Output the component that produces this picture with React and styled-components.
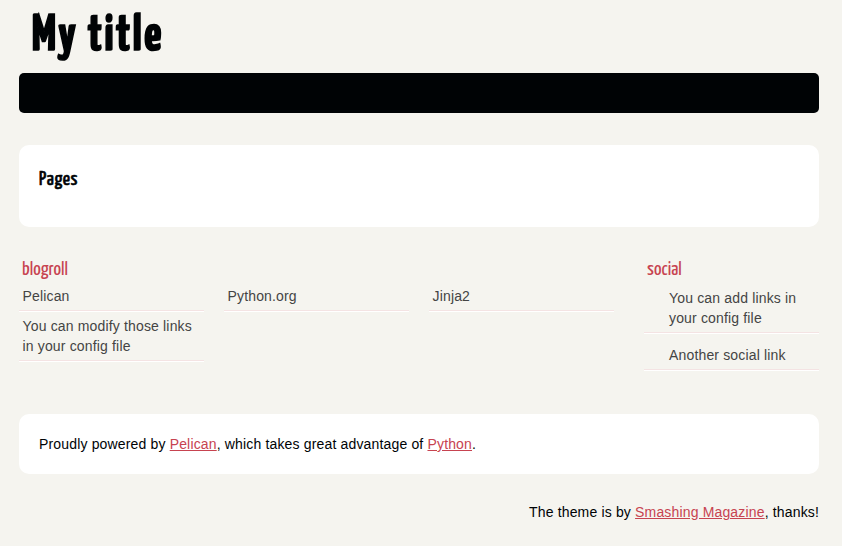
import React from "react";
import styled, { createGlobalStyle } from "styled-components";

const Global = createGlobalStyle`
  body {
    margin: 0;
    background: #f5f4ef;
    color: #000305;
    font-family: "Liberation Sans", Arial, sans-serif;
    font-size: 14px;
    line-height: 20px;
    letter-spacing: 0.16px;
  }
`;

const headingFont = `"Yanone Kaffeesatz", "Liberation Sans Narrow", "Liberation Sans", sans-serif`;

const Page = styled.div`
  width: 800px;
  margin-left: 19px;
`;

const SiteTitle = styled.h1`
  box-sizing: border-box;
  height: 73px;
  margin: 0;
  padding: 9px 0 0 13px;
  font-family: ${headingFont};
  font-weight: bold;
  font-size: 50px;
  line-height: 55px;
  letter-spacing: 2.6px;

  a {
    color: #000305;
    text-decoration: none;
    -webkit-text-stroke: 1.5px #000305;
  }
`;

const Nav = styled.nav`
  height: 40px;
  background: #000305;
  border-radius: 5px;
  margin-bottom: 32px;
`;

const Panel = styled.section`
  background: #fff;
  border-radius: 10px;
  padding: 20px;
`;

const PanelTitle = styled.h2`
  margin: 0;
  padding: 4px 0 16px;
  font-family: ${headingFont};
  font-weight: normal;
  font-size: 20px;
  line-height: 22px;
  letter-spacing: 0.6px;
  -webkit-text-stroke: 0.6px #000305;
`;

const Extras = styled.div`
  display: flex;
  justify-content: space-between;
  align-items: flex-start;
  margin-top: 28px;
`;

const Column = styled.div`
  width: ${(p) => p.$width}px;
`;

const ExtrasTitle = styled.h2`
  margin: 0;
  padding: 1.5px 3px 0;
  font-family: ${headingFont};
  font-weight: normal;
  font-size: 20px;
  line-height: 25px;
  letter-spacing: 0;
  color: #c74350;
`;

const LinkList = styled.ul`
  list-style: none;
  margin: ${(p) => p.$offset || 0}px 0 0;
  padding: 0;
  display: flex;
  flex-wrap: wrap;
  align-items: flex-start;
`;

const LinkItem = styled.li`
  width: ${(p) => p.$width}px;
  margin-right: ${(p) => p.$gap || 0}px;
  border-bottom: 1px solid #fff;
`;

const ExtraLink = styled.a`
  display: block;
  color: #444;
  text-decoration: none;
  border-bottom: 1px solid #f4e3e3;
  padding: ${(p) => p.$top || 4.2}px 3.5px 4.2px ${(p) => p.$indent || 3.5}px;
`;

const About = styled.footer`
  margin-top: 43px;
  background: #fff;
  border-radius: 10px;
  padding: 20px;
`;

const Credits = styled.p`
  margin: 28px 0 0;
  text-align: right;
`;

const TextLink = styled.a`
  color: #c74350;
`;

const blogroll = [
  "Pelican",
  "Python.org",
  "Jinja2",
  "You can modify those links in your config file",
];

const social = [
  { label: "You can add links in your config file", top: 4.2 },
  { label: "Another social link", top: 10.8 },
];

export default function App() {
  return (
    <>
      <Global />
      <Page>
        <header>
          <SiteTitle>
            <a href="#">My title</a>
          </SiteTitle>
          <Nav />
        </header>

        <Panel>
          <PanelTitle>Pages</PanelTitle>
        </Panel>

        <Extras>
          <Column $width={615}>
            <ExtrasTitle>blogroll</ExtrasTitle>
            <LinkList>
              {blogroll.map((item) => (
                <LinkItem key={item} $width={185} $gap={20}>
                  <ExtraLink href="#">{item}</ExtraLink>
                </LinkItem>
              ))}
            </LinkList>
          </Column>
          <Column $width={175}>
            <ExtrasTitle>social</ExtrasTitle>
            <LinkList $offset={2}>
              {social.map((item) => (
                <LinkItem key={item.label} $width={175}>
                  <ExtraLink href="#" $top={item.top} $indent={25}>
                    {item.label}
                  </ExtraLink>
                </LinkItem>
              ))}
            </LinkList>
          </Column>
        </Extras>

        <About>
          Proudly powered by <TextLink href="#">Pelican</TextLink>, which takes
          great advantage of <TextLink href="#">Python</TextLink>.
        </About>

        <Credits>
          The theme is by <TextLink href="#">Smashing Magazine</TextLink>,
          thanks!
        </Credits>
      </Page>
    </>
  );
}
